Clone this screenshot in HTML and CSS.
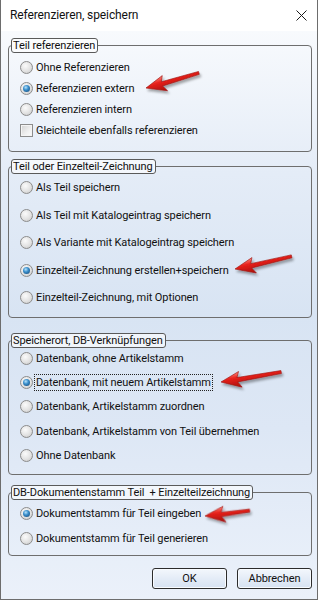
FILE: index.html
```html
<!DOCTYPE html>
<html lang="de">
  <head>
    <meta charset="UTF-8" />
    <meta name="viewport" content="width=device-width, initial-scale=1.0" />
    <title>Referenzieren, speichern</title>
    <link rel="stylesheet" href="styles.css">
  </head>

  <body>
    <div class="window">
      <div class="titlebar">
        <span class="title">Referenzieren, speichern</span>
        <svg class="close" width="11" height="11" viewBox="0 0 11 11">
          <path d="M0.5 0.5 L10.5 10.5 M10.5 0.5 L0.5 10.5" stroke="#1a1a1a" stroke-width="1" fill="none" />
        </svg>
      </div>

      <div class="dialog">
        <fieldset class="group g1">
          <legend>Teil referenzieren</legend>
          <div class="options">
            <label class="opt"><span class="radio"></span>Ohne Referenzieren</label>
            <label class="opt"><span class="radio on"></span>Referenzieren extern</label>
            <label class="opt"><span class="radio"></span>Referenzieren intern</label>
            <label class="opt"><span class="check"></span>Gleichteile ebenfalls referenzieren</label>
          </div>
        </fieldset>

        <fieldset class="group g2">
          <legend>Teil oder Einzelteil-Zeichnung</legend>
          <div class="options">
            <label class="opt"><span class="radio"></span>Als Teil speichern</label>
            <label class="opt"><span class="radio"></span>Als Teil mit Katalogeintrag speichern</label>
            <label class="opt"><span class="radio"></span>Als Variante mit Katalogeintrag speichern</label>
            <label class="opt"><span class="radio on"></span>Einzelteil-Zeichnung erstellen+speichern</label>
            <label class="opt"><span class="radio"></span>Einzelteil-Zeichnung, mit Optionen</label>
          </div>
        </fieldset>

        <fieldset class="group g3">
          <legend>Speicherort, DB-Verknüpfungen</legend>
          <div class="options">
            <label class="opt"><span class="radio"></span>Datenbank, ohne Artikelstamm</label>
            <label class="opt"><span class="radio on"></span><span class="focus">Datenbank, mit neuem Artikelstamm</span></label>
            <label class="opt"><span class="radio"></span>Datenbank, Artikelstamm zuordnen</label>
            <label class="opt"><span class="radio"></span>Datenbank, Artikelstamm von Teil übernehmen</label>
            <label class="opt"><span class="radio"></span>Ohne Datenbank</label>
          </div>
        </fieldset>

        <fieldset class="group g4">
          <legend>DB-Dokumentenstamm Teil &nbsp;+ Einzelteilzeichnung</legend>
          <div class="options">
            <label class="opt"><span class="radio on"></span>Dokumentstamm für Teil eingeben</label>
            <label class="opt"><span class="radio"></span>Dokumentstamm für Teil generieren</label>
          </div>
        </fieldset>

        <div class="buttons">
          <button class="btn">OK</button>
          <button class="btn">Abbrechen</button>
        </div>
      </div>

      <!-- red pointer arrows drawn over the dialog -->
      <svg class="arrows" width="320" height="601" viewBox="0 0 320 601">
        <defs>
          <linearGradient id="red" x1="0" y1="0" x2="0" y2="1">
            <stop offset="0" stop-color="#ff8a80" />
            <stop offset="0.35" stop-color="#e8221c" />
            <stop offset="1" stop-color="#a80d0a" />
          </linearGradient>
          <filter id="shadow" x="-20%" y="-50%" width="140%" height="220%">
            <feDropShadow dx="1.5" dy="2.5" stdDeviation="1.3" flood-color="#000" flood-opacity="0.35" />
          </filter>
        </defs>
        <g filter="url(#shadow)" fill="url(#red)" stroke="#9c1512" stroke-width="0.6">
          <path transform="translate(146 88) rotate(-15.8)" d="M0 0 L19 -7.5 L16.5 -1.8 L55 -1.6 L55 1.4 L16.5 2.6 L20 8.5 Z" />
          <path transform="translate(235 269) rotate(-12.5)" d="M0 0 L19 -7.5 L16.5 -1.8 L58 -1.6 L58 1.4 L16.5 2.6 L20 8.5 Z" />
          <path transform="translate(221 382) rotate(-9.3)" d="M0 0 L19 -7.5 L16.5 -1.8 L61 -1.6 L61 1.4 L16.5 2.6 L20 8.5 Z" />
          <path transform="translate(205 516) rotate(-6.9)" d="M0 0 L19 -7.5 L16.5 -1.8 L45 -1.6 L45 1.4 L16.5 2.6 L20 8.5 Z" />
        </g>
      </svg>
    </div>
  </body>
</html>
```

FILE: styles.css
```css
body {
  margin: 0;
  padding: 0;
  background-color: #fff;
  font-family: Roboto, "Noto Sans", sans-serif;
  font-size: 11px;
  letter-spacing: -0.1px;
  color: #111;
}

.window {
  position: relative;
  width: 318px;
  height: 600px;
  box-sizing: border-box;
  border: 1px solid #6d6d6d;
  border-top: none;
  display: flex;
  flex-direction: column;
}

.titlebar {
  height: 31px;
  flex: none;
  display: flex;
  align-items: center;
  justify-content: space-between;
  padding: 0 8px 0 9px;
  background-color: #fff;
}

.title {
  font-size: 12px;
  line-height: 31px;
}

.close {
  margin-right: 2px;
}

.dialog {
  flex: 1;
  padding: 7px 5px 0 7px;
  background: linear-gradient(#f8fafd 0%, #e4ecf7 25%, #d8e4f3 50%, #dde7f5 70%, #ebf1fa 100%);
}

/* group boxes */
.group {
  margin: 0;
  padding: 0 2px;
  border: 1px solid #6e6e6e;
  border-radius: 4px;
}

.group legend {
  padding: 0 2px 0 1px;
  margin-left: 0;
  height: 15px;
  box-sizing: border-box;
  line-height: 13px;
  border: 1px solid #5a5a5a;
  border-radius: 3px;
  background-color: rgba(255, 255, 255, 0.6);
}

.options {
  display: flex;
  flex-direction: column;
  padding-left: 9px;
}

.opt {
  display: flex;
  align-items: center;
  height: 15px;
  line-height: 15px;
  white-space: nowrap;
}

.g1 .options {
  gap: 6.3px;
  padding-top: 6.5px;
  padding-bottom: 12.5px;
}

.g2 {
  margin-top: 7px;
}

.g2 .options {
  gap: 12.5px;
  padding-top: 6.5px;
  padding-bottom: 11.5px;
}

.g3 {
  margin-top: 15px;
}

.g3 .options {
  gap: 9.4px;
  padding-top: 2.8px;
  padding-bottom: 10.5px;
}

.g4 {
  margin-top: 10px;
}

.g4 .options {
  gap: 10px;
  padding-top: 6.5px;
  padding-bottom: 8.5px;
}

.radio {
  position: relative;
  flex: none;
  width: 13px;
  height: 13px;
  margin-right: 3px;
  box-sizing: border-box;
  border: 1px solid #8c8c8c;
  border-radius: 50%;
  background: radial-gradient(circle at 40% 35%, #fbfbfb 0%, #e2e2e2 55%, #c4c4c4 100%);
}

.radio.on::after {
  content: "";
  position: absolute;
  left: 2px;
  top: 2px;
  width: 7px;
  height: 7px;
  border-radius: 50%;
  background: radial-gradient(circle at 40% 35%, #b6e2fb 0%, #3a8fcc 40%, #123f6c 100%);
}

.check {
  flex: none;
  width: 13px;
  height: 13px;
  margin-right: 3px;
  box-sizing: border-box;
  border: 1px solid #8c8c8c;
  background: linear-gradient(135deg, #d2d2d2 0%, #f0f0f0 60%, #fdfdfd 100%);
  box-shadow: inset 0 0 0 1px #f4f4f4;
}

.focus {
  outline: 1px dotted #222;
  outline-offset: 0;
  padding: 0 1px;
  margin-left: -1px;
}

/* buttons */
.buttons {
  display: flex;
  justify-content: flex-end;
  gap: 10px;
  margin-top: 12px;
}

.btn {
  width: 75px;
  height: 21px;
  padding: 0;
  font-family: Roboto, "Noto Sans", sans-serif;
  font-size: 11px;
  letter-spacing: -0.1px;
  color: #111;
  border: 1px solid #2c2c2c;
  border-radius: 3px;
  background: linear-gradient(#f3f7fc 0%, #e4ecf7 50%, #d6e2f2 100%);
  box-shadow: inset 0 0 0 1px #f8fbff;
}

.arrows {
  position: absolute;
  left: -1px;
  top: 0;
  pointer-events: none;
}
```
